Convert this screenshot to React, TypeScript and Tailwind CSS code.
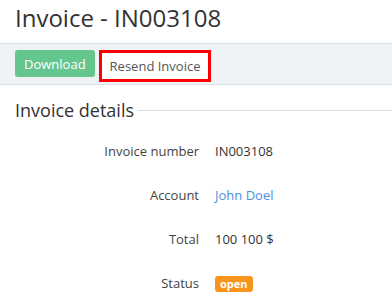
export default function App() {
  const rows: { label: string; value: React.ReactNode }[] = [
    { label: "Invoice number", value: <span className="text-[#333]">IN003108</span> },
    { label: "Account", value: <span className="text-[#4a90e2]">John Doel</span> },
    { label: "Total", value: <span className="text-[#333]">100 100 $</span> },
    {
      label: "Status",
      value: (
        <span className="inline-block rounded-[3px] bg-[#f7941e] px-[5px] text-[11px] font-bold leading-[16px] text-white">
          open
        </span>
      ),
    },
  ];

  return (
    <div className="h-[306px] w-[392px] overflow-hidden bg-white font-['Open_Sans',sans-serif] text-[#333]">
      <h1 className="px-[15px] text-[24px] leading-[36px] text-[#333]">Invoice - IN003108</h1>
      <div className="mt-[7px] flex items-start gap-[4px] border-y border-[#dde2e7] bg-[#eff3f6] px-[15px] pt-[6px] pb-[2px]">
        <button className="h-[27px] rounded-[3px] bg-[#65c58f] px-[9px] text-[13px] leading-[28px] text-white">
          Download
        </button>
        <div className="border-[3px] border-[#ff0000] bg-white">
          <button className="h-[24px] px-[8px] text-[13px] text-[#555]">Resend Invoice</button>
        </div>
      </div>
      <div className="mt-[12px] flex items-center gap-[4px] pl-[15px]">
        <span className="text-[18px] leading-[26px] text-[#333]">Invoice details</span>
        <div className="mt-[2px] h-px flex-1 bg-[#d5dde6]" />
      </div>
      <div className="mt-[17px] flex flex-col gap-[22px]">
        {rows.map((r) => (
          <div key={r.label} className="flex items-center text-[13px] leading-[22px]">
            <div className="w-[199px] text-right text-[#444]">{r.label}</div>
            <div className="pl-[16px]">{r.value}</div>
          </div>
        ))}
      </div>
    </div>
  );
}
